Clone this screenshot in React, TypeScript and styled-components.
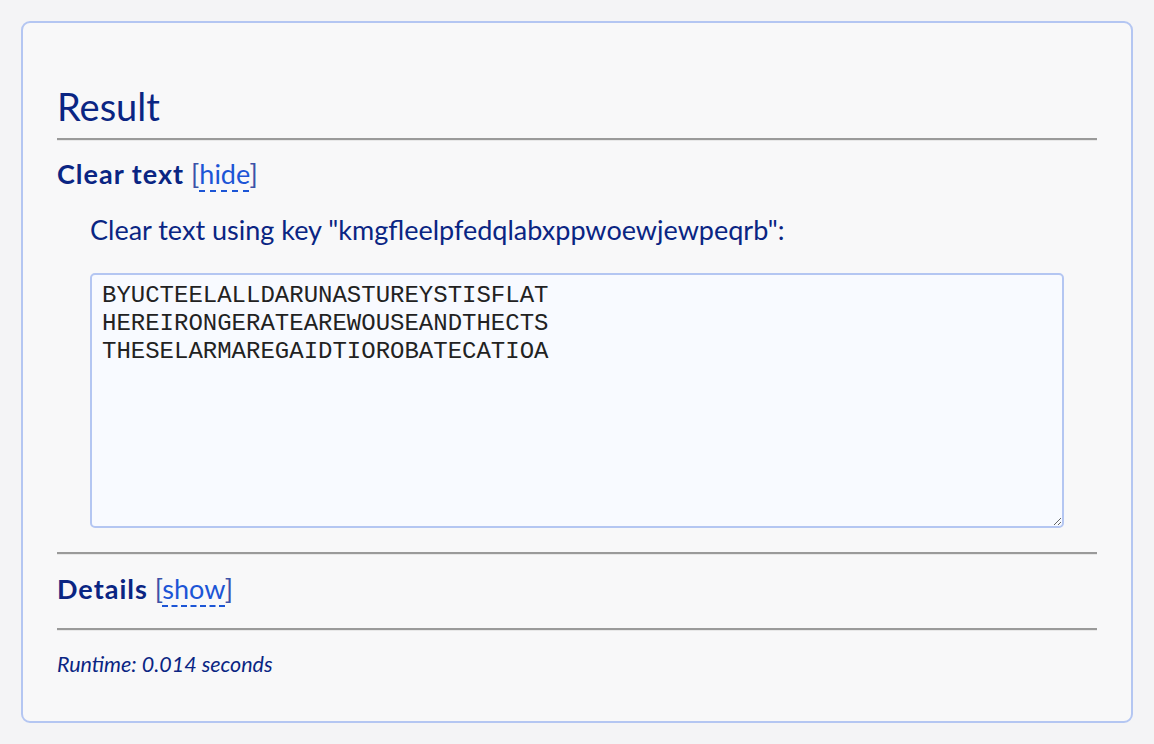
import React from "react";
import styled, { createGlobalStyle } from "styled-components";

const Global = createGlobalStyle`
  html, body { margin: 0; padding: 0; }
  body {
    background: #f4f4f6;
    font-family: Lato, "Open Sans", sans-serif;
    color: #0a2583;
  }
`;

const Page = styled.div`
  padding: 21px;
  width: 1154px;
  height: 744px;
  box-sizing: border-box;
`;

const Card = styled.section`
  box-sizing: border-box;
  height: 702px;
  border: 2px solid #b4c6f2;
  border-radius: 9px;
  background: #f8f8f9;
  padding: 51px 34px 0 34px;
`;

const Title = styled.h2`
  margin: 0;
  font-size: 38px;
  font-weight: 400;
  line-height: 64px;
  color: #0a2583;
`;

const Rule = styled.hr`
  margin: 0;
  border: 0;
  height: 2px;
  background: #9a9a9a;
  box-shadow: 0 1px 0 #e8e8e8;
`;

const SectionHead = styled.div`
  display: flex;
  align-items: baseline;
  gap: 7px;
  font-size: 27px;
  line-height: 34px;
  padding: 17px 0 0 0;
`;

const HeadLabel = styled.span`
  font-weight: 700;
  letter-spacing: 1px;
  color: #0a2583;
`;

const Bracket = styled.span`
  color: #3c52a8;
`;

const Toggle = styled.a`
  color: #1c55d6;
  text-decoration: none;
  border-bottom: 2px dashed #1c55d6;
  cursor: pointer;
`;

const Body = styled.div`
  padding: 22px 0 24px 33px;
`;

const Caption = styled.p`
  margin: 0 0 26px 0;
  font-size: 27px;
  line-height: 34px;
`;

const Output = styled.textarea`
  display: block;
  box-sizing: border-box;
  width: 974px;
  height: 255px;
  border: 2px solid #b4c6f2;
  border-radius: 5px;
  background: #f8faff;
  padding: 7px 10px;
  font-family: "Liberation Mono", "Courier New", monospace;
  font-size: 24px;
  line-height: 28px;
  color: #222;
  resize: vertical;
  outline: none;
`;

const Runtime = styled.p`
  margin: 21px 0 0 0;
  font-size: 21.5px;
  font-style: italic;
  color: #0a2583;
`;

const DetailsHead = styled(SectionHead)`
  padding: 18px 0 22px 0;
`;

export default function App() {
  return (
    <Page>
      <Global />
      <Card>
        <Title>Result</Title>
        <Rule />
        <SectionHead>
          <HeadLabel>Clear text</HeadLabel>
          <span>
            <Bracket>[</Bracket>
            <Toggle>hide</Toggle>
            <Bracket>]</Bracket>
          </span>
        </SectionHead>
        <Body>
          <Caption>Clear text using key "kmgfleelpfedqlabxppwoewjewpeqrb":</Caption>
          <Output
            readOnly
            defaultValue={"BYUCTEELALLDARUNASTUREYSTISFLAT\nHEREIRONGERATEAREWOUSEANDTHECTS\nTHESELARMAREGAIDTIOROBATECATIOA"}
          />
        </Body>
        <Rule />
        <DetailsHead>
          <HeadLabel>Details</HeadLabel>
          <span>
            <Bracket>[</Bracket>
            <Toggle>show</Toggle>
            <Bracket>]</Bracket>
          </span>
        </DetailsHead>
        <Rule />
        <Runtime>Runtime: 0.014 seconds</Runtime>
      </Card>
    </Page>
  );
}
